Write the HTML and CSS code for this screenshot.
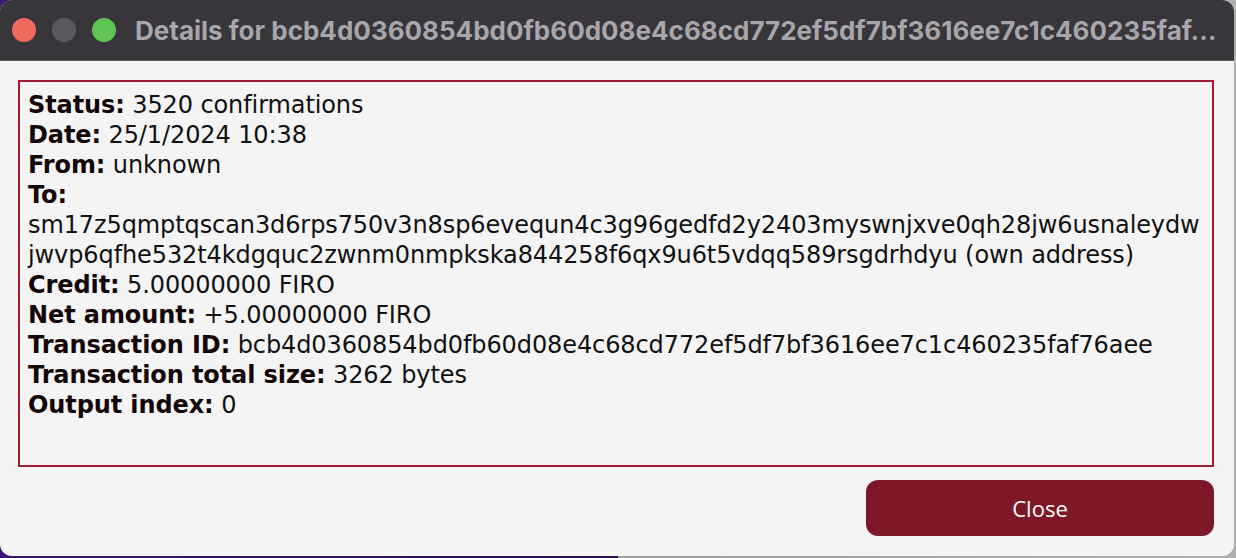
FILE: index.html
```html
<!DOCTYPE html>
<html>
<head>
<meta charset="utf-8">
<link rel="stylesheet" href="styles.css">
</head>
<body>
<div class="window">
  <div class="titlebar">
    <div class="lights">
      <span class="light red"></span>
      <span class="light grey"></span>
      <span class="light green"></span>
    </div>
    <div class="title">Details for bcb4d0360854bd0fb60d08e4c68cd772ef5df7bf3616ee7c1c460235faf…</div>
  </div>
  <div class="content">
    <div class="details">
      <div><b>Status:</b> 3520 confirmations</div>
      <div><b>Date:</b> 25/1/2024 10:38</div>
      <div><b>From:</b> unknown</div>
      <div><b>To:</b></div>
      <div>sm17z5qmptqscan3d6rps750v3n8sp6evequn4c3g96gedfd2y2403myswnjxve0qh28jw6usnaleydw</div>
      <div>jwvp6qfhe532t4kdgquc2zwnm0nmpkska844258f6qx9u6t5vdqq589rsgdrhdyu (own address)</div>
      <div><b>Credit:</b> 5.00000000 FIRO</div>
      <div><b>Net amount:</b> +5.00000000 FIRO</div>
      <div><b>Transaction ID:</b> bcb4d0360854bd0fb60d08e4c68cd772ef5df7bf3616ee7c1c460235faf76aee</div>
      <div><b>Transaction total size:</b> 3262 bytes</div>
      <div><b>Output index:</b> 0</div>
    </div>
    <div class="actions">
      <button class="close">Close</button>
    </div>
  </div>
</div>
</body>
</html>
```

FILE: styles.css
```css
html, body {
  margin: 0;
  padding: 0;
  width: 1236px;
  height: 558px;
  overflow: hidden;
}
body {
  background: linear-gradient(to right, #3a1670 0%, #2a0e4e 50%, #9c9c9c 50%, #b0b0b0 100%);
}
.window {
  width: 1234px;
  height: 556px;
  border-radius: 12px;
  overflow: hidden;
  background: #f4f4f4;
  display: flex;
  flex-direction: column;
}
.titlebar {
  height: 60px;
  flex: none;
  background: #38353b;
  border-bottom: 1px solid #5a585c;
  display: flex;
  align-items: center;
  padding-left: 12px;
}
.lights {
  display: flex;
  gap: 16px;
}
.light {
  width: 24px;
  height: 24px;
  border-radius: 50%;
  display: block;
}
.red { background: #ee6a5f; }
.grey { background: #5b595e; }
.green { background: #5fc454; }
.title {
  margin-left: 19px;
  font-family: Inter, "Open Sans", sans-serif;
  font-weight: 700;
  font-size: 26px;
  color: #a8a5ab;
  white-space: nowrap;
  overflow: hidden;
  width: 1090px;
}
.content {
  flex: 1;
  padding: 19px 20px 0 18px;
  display: flex;
  flex-direction: column;
}
.details {
  height: 375px;
  border: 2px solid #a11b31;
  padding: 8px 8px 0 8px;
  font-family: "DejaVu Sans", Verdana, sans-serif;
  font-size: 24px;
  line-height: 30px;
  letter-spacing: -0.1px;
  color: #111;
}
.details b {
  font-weight: 700;
  color: #140606;
}
.actions {
  display: flex;
  justify-content: flex-end;
  margin-top: 13px;
}
.close {
  width: 348px;
  height: 56px;
  border: none;
  border-radius: 12px;
  background: #7e1826;
  color: #ffffff;
  font-family: "Open Sans", sans-serif;
  font-size: 22px;
  font-weight: 500;
}
```
